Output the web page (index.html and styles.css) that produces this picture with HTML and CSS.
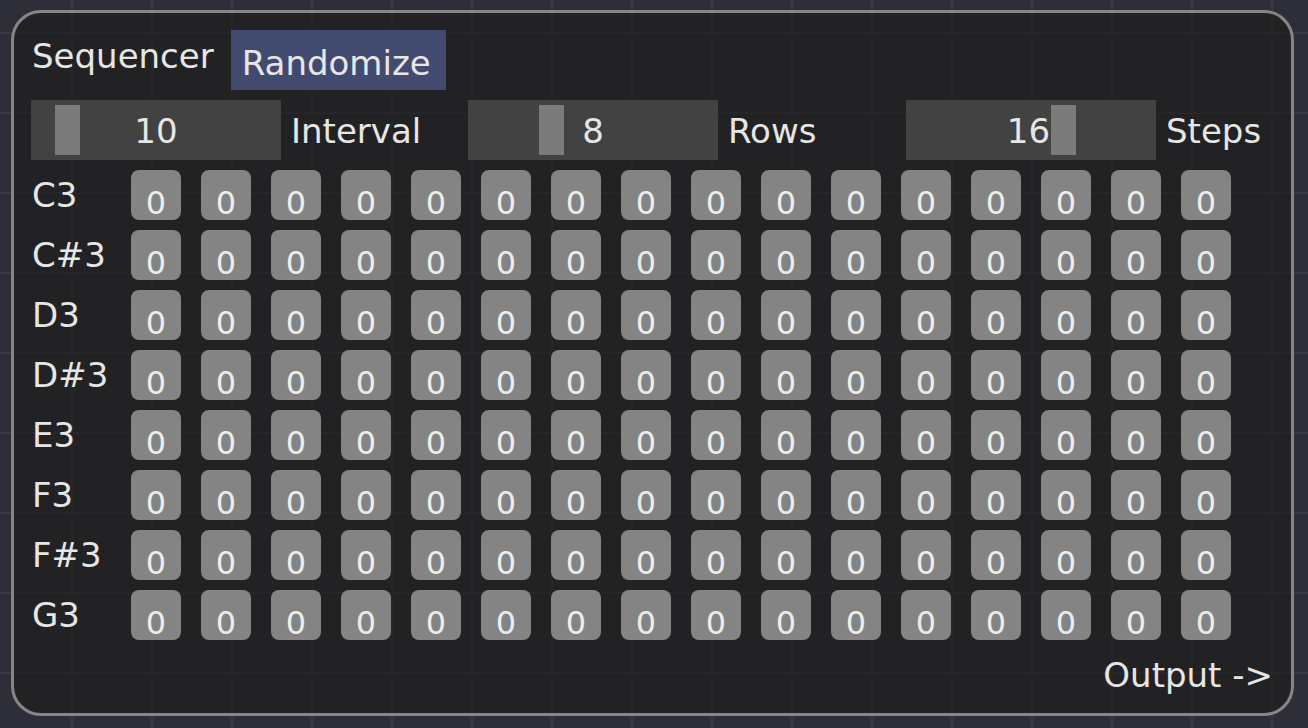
FILE: index.html
```html
<!DOCTYPE html>
<html>
<head>
<meta charset="utf-8">
<link rel="stylesheet" href="styles.css">
</head>
<body>
<div class="panel">
  <div class="header">
    <div class="title">Sequencer</div>
    <div class="btn">Randomize</div>
  </div>
  <div class="sliders">
    <div class="group">
      <div class="slider"><div class="thumb" style="left:24px"></div><span class="val">10</span></div>
      <div class="label">Interval</div>
    </div>
    <div class="group">
      <div class="slider"><div class="thumb" style="left:71px"></div><span class="val">8</span></div>
      <div class="label">Rows</div>
    </div>
    <div class="group">
      <div class="slider"><div class="thumb" style="left:145px"></div><span class="val val-steps">16</span></div>
      <div class="label">Steps</div>
    </div>
  </div>
  <div class="row"><div class="note">C3</div><div class="cells"><div class="cell">0</div><div class="cell">0</div><div class="cell">0</div><div class="cell">0</div><div class="cell">0</div><div class="cell">0</div><div class="cell">0</div><div class="cell">0</div><div class="cell">0</div><div class="cell">0</div><div class="cell">0</div><div class="cell">0</div><div class="cell">0</div><div class="cell">0</div><div class="cell">0</div><div class="cell">0</div></div></div>
  <div class="row"><div class="note">C#3</div><div class="cells"><div class="cell">0</div><div class="cell">0</div><div class="cell">0</div><div class="cell">0</div><div class="cell">0</div><div class="cell">0</div><div class="cell">0</div><div class="cell">0</div><div class="cell">0</div><div class="cell">0</div><div class="cell">0</div><div class="cell">0</div><div class="cell">0</div><div class="cell">0</div><div class="cell">0</div><div class="cell">0</div></div></div>
  <div class="row"><div class="note">D3</div><div class="cells"><div class="cell">0</div><div class="cell">0</div><div class="cell">0</div><div class="cell">0</div><div class="cell">0</div><div class="cell">0</div><div class="cell">0</div><div class="cell">0</div><div class="cell">0</div><div class="cell">0</div><div class="cell">0</div><div class="cell">0</div><div class="cell">0</div><div class="cell">0</div><div class="cell">0</div><div class="cell">0</div></div></div>
  <div class="row"><div class="note">D#3</div><div class="cells"><div class="cell">0</div><div class="cell">0</div><div class="cell">0</div><div class="cell">0</div><div class="cell">0</div><div class="cell">0</div><div class="cell">0</div><div class="cell">0</div><div class="cell">0</div><div class="cell">0</div><div class="cell">0</div><div class="cell">0</div><div class="cell">0</div><div class="cell">0</div><div class="cell">0</div><div class="cell">0</div></div></div>
  <div class="row"><div class="note">E3</div><div class="cells"><div class="cell">0</div><div class="cell">0</div><div class="cell">0</div><div class="cell">0</div><div class="cell">0</div><div class="cell">0</div><div class="cell">0</div><div class="cell">0</div><div class="cell">0</div><div class="cell">0</div><div class="cell">0</div><div class="cell">0</div><div class="cell">0</div><div class="cell">0</div><div class="cell">0</div><div class="cell">0</div></div></div>
  <div class="row"><div class="note">F3</div><div class="cells"><div class="cell">0</div><div class="cell">0</div><div class="cell">0</div><div class="cell">0</div><div class="cell">0</div><div class="cell">0</div><div class="cell">0</div><div class="cell">0</div><div class="cell">0</div><div class="cell">0</div><div class="cell">0</div><div class="cell">0</div><div class="cell">0</div><div class="cell">0</div><div class="cell">0</div><div class="cell">0</div></div></div>
  <div class="row"><div class="note">F#3</div><div class="cells"><div class="cell">0</div><div class="cell">0</div><div class="cell">0</div><div class="cell">0</div><div class="cell">0</div><div class="cell">0</div><div class="cell">0</div><div class="cell">0</div><div class="cell">0</div><div class="cell">0</div><div class="cell">0</div><div class="cell">0</div><div class="cell">0</div><div class="cell">0</div><div class="cell">0</div><div class="cell">0</div></div></div>
  <div class="row"><div class="note">G3</div><div class="cells"><div class="cell">0</div><div class="cell">0</div><div class="cell">0</div><div class="cell">0</div><div class="cell">0</div><div class="cell">0</div><div class="cell">0</div><div class="cell">0</div><div class="cell">0</div><div class="cell">0</div><div class="cell">0</div><div class="cell">0</div><div class="cell">0</div><div class="cell">0</div><div class="cell">0</div><div class="cell">0</div></div></div>
  <div class="footer">Output -&gt;</div>
</div>
</body>
</html>
```
FILE: styles.css
```css
* { box-sizing: border-box; }
html, body { margin: 0; padding: 0; }
body {
  width: 1308px;
  height: 728px;
  overflow: hidden;
  background-color: #2e2e39;
  background-image:
    linear-gradient(to right, #393943 0, #393943 2px, transparent 2px),
    linear-gradient(to bottom, #393943 0, #393943 2px, transparent 2px);
  background-size: 80px 80px;
  background-position: 71px 32px;
  font-family: "DejaVu Sans", "Noto Sans", sans-serif;
  color: #e6e6e6;
  padding-top: 10px;
  padding-left: 11px;
}
.panel {
  width: 1283px;
  height: 706px;
  border: 3px solid #868686;
  border-radius: 30px;
  background: rgba(28, 28, 25, 0.62);
  padding: 17px 17px 0 17px;
  display: flex;
  flex-direction: column;
  gap: 10px;
}
.header {
  display: flex;
  align-items: flex-start;
  gap: 17px;
  height: 60px;
}
.title {
  font-size: 34px;
  line-height: 1;
  padding-top: 9px;
  padding-left: 1px;
}
.btn {
  background: #434a6f;
  height: 60px;
  width: 215px;
  font-size: 34px;
  line-height: 60px;
  padding-left: 11px;
  padding-top: 3px;
  overflow: hidden;
  white-space: nowrap;
}
.sliders {
  display: grid;
  grid-template-columns: 437px 438px auto;
  height: 60px;
}
.group {
  display: flex;
  align-items: center;
  gap: 10px;
}
.slider {
  position: relative;
  width: 250px;
  height: 60px;
  background: #424242;
  display: flex;
  align-items: center;
  justify-content: center;
  font-size: 34px;
}
.thumb {
  position: absolute;
  top: 5px;
  width: 25px;
  height: 50px;
  background: #7b7b7b;
}
.val { position: relative; padding-top: 2px; }
.val-steps { margin-left: -5px; }
.label {
  font-size: 34px;
  padding-top: 2px;
}
.row {
  display: flex;
  align-items: center;
  height: 50px;
}
.note {
  width: 100px;
  font-size: 34px;
  padding-left: 1px;
}
.cells {
  display: flex;
  gap: 20px;
}
.cell {
  width: 50px;
  height: 50px;
  border-radius: 8px;
  background: #848484;
  font-size: 32px;
  text-align: center;
  line-height: 50px;
  padding-top: 8px;
  color: #ececec;
}
.footer {
  align-self: flex-end;
  font-size: 34px;
  margin-top: 5px;
  margin-right: 1px;
}
```
